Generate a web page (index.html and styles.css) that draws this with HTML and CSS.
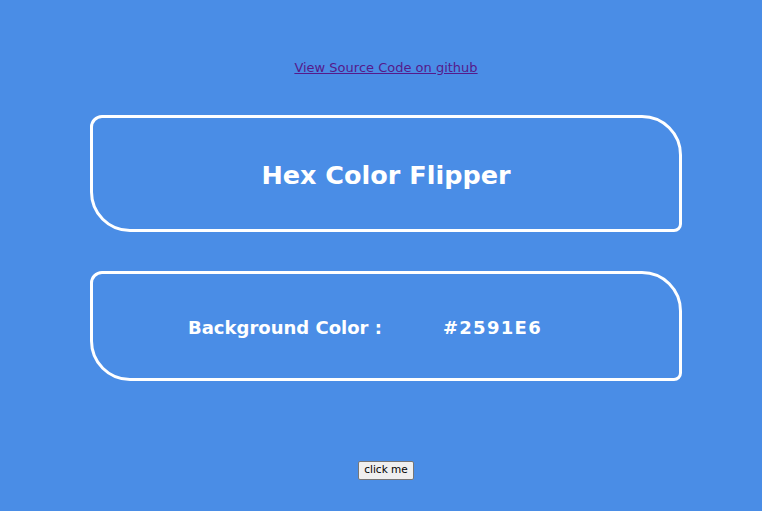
FILE: index.html
```html
<!DOCTYPE html>
<html>
<head>
<meta charset="utf-8">
<link rel="stylesheet" href="styles.css">
</head>
<body>
<main class="page">
  <p class="source"><a href="#" class="source-link">View Source Code on github</a></p>
  <section class="card card-title">
    <h1 class="title">Hex Color Flipper</h1>
  </section>
  <section class="card card-color">
    <h2 class="color-line"><span class="label">Background Color :</span><span class="value">#2591E6</span></h2>
  </section>
  <div class="actions"><button class="btn">click me</button></div>
</main>
</body>
</html>
```
FILE: styles.css
```css
html, body {
  margin: 0;
  padding: 0;
}
body {
  background: #4a8de6;
  font-family: "DejaVu Sans", Verdana, sans-serif;
  color: #fff;
}
.page {
  padding: 59px 0 0 10px;
  display: flex;
  flex-direction: column;
  align-items: center;
}
.source {
  margin: 0;
  font-size: 13px;
  line-height: 18px;
}
.source-link {
  color: #551a8b;
}
.card {
  box-sizing: border-box;
  width: 592px;
  border: 3px solid #fff;
  border-radius: 12px 40px 8px 40px;
  display: flex;
  align-items: center;
  justify-content: center;
}
.card-title {
  margin-top: 38px;
  height: 117px;
}
.card-color {
  margin-top: 39px;
  height: 110px;
}
.title {
  margin: 0;
  font-size: 25.5px;
  font-weight: bold;
  transform: translateY(1px);
}
.color-line {
  margin: 0 42px 0 0;
  font-size: 18px;
  font-weight: bold;
  display: flex;
  gap: 61px;
  transform: translateY(1px);
}
.value {
  letter-spacing: 1.3px;
}
.actions {
  margin-top: 80px;
  line-height: 0;
}
.btn {
  font-family: "DejaVu Sans", Verdana, sans-serif;
  font-size: 10.5px;
  line-height: 13px;
  padding: 1px 5px 3px;
  background: #efefef;
  border: 1px solid #767676;
  border-radius: 2px;
  color: #000;
}
```
